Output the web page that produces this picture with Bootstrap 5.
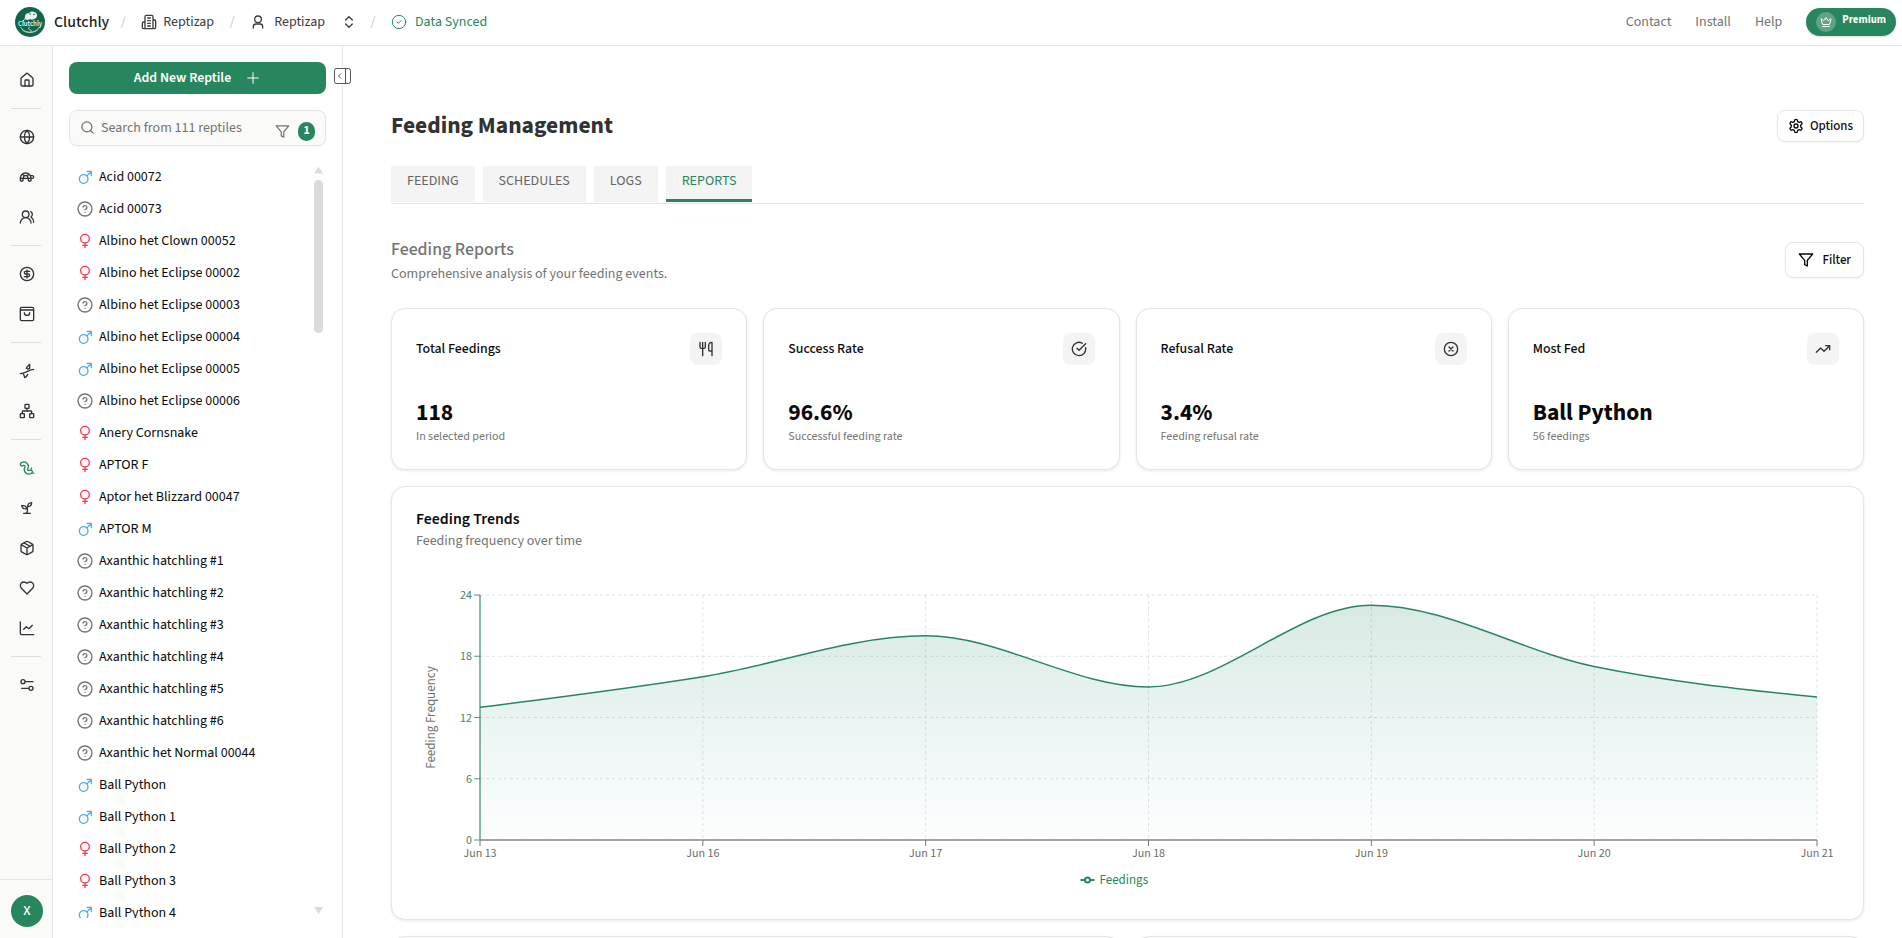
<!DOCTYPE html>
<html lang="en">
<head>
<meta charset="utf-8">
<meta name="viewport" content="width=device-width, initial-scale=1">
<title>Clutchly – Feeding Management</title>
<link href="https://cdn.jsdelivr.net/npm/bootstrap@5.3.0/dist/css/bootstrap.min.css" rel="stylesheet">
<style>
:root{--green:#28865e;--line:#e4e5e4;--muted:#737373;--soft:#f4f4f4;--ink:#303233}
body{font-family:"Source Sans 3","Noto Sans CJK SC",sans-serif;font-size-adjust:.486;font-size:14px;line-height:20px;color:#0a0a0a;background:#fff}
a{text-decoration:none;color:inherit}
button,input{font-size-adjust:inherit}
svg{display:block;flex:none}
.ico{width:16px;height:16px;fill:none;stroke:currentColor;stroke-width:2;stroke-linecap:round;stroke-linejoin:round}
.thin{stroke-width:1.5}
.app-top{height:46px;border-bottom:1px solid var(--line);color:#3a3c3d;padding-bottom:1px}
.brand-link{padding-left:15px;gap:9px}
.brand-name{font-size:16px;font-weight:500;color:#202223}
.slash{color:#c5cac8;width:20px;text-align:center}
.near{gap:6px}
.profile{font-size:14px;line-height:20px;color:inherit;margin-right:6px}
.text-green{color:var(--green)}
.top-links{gap:24px;color:var(--muted);padding-right:6px}
.premium{height:28px;background:var(--green);color:#fff;border:0;border-radius:14px;font-size:11px;line-height:16px;font-weight:700;gap:6px;padding:0 10px;box-shadow:0 1px 2px rgba(0,0,0,.15)}
.crown{width:20px;height:20px;border-radius:50%;background:rgba(255,255,255,.25)}
.crown svg{width:12px;height:12px}
.app-body{height:calc(100vh - 46px)}
.rail{width:53px;background:#fafaf9;border-right:1px solid var(--line);color:var(--ink);flex:none}
.rail-items{padding-top:14px}
.rail a{display:flex;align-items:center;justify-content:center;height:40px;width:53px}
.rail hr{width:30px;margin:8px auto;border-top:1px solid #dcdddd;opacity:1}
.rail-foot{border-top:1px solid var(--line);height:59px;padding:15px 0 0 11px}
.avatar{width:32px;height:32px;border-radius:50%;background:var(--green);color:#fff;font-size:14px;font-weight:500}
.side{width:290px;border-right:1px solid var(--line);padding:16px 16px 20px;flex:none;position:relative}
.fold{position:absolute;right:-9px;top:21px;width:17px;height:18px;background:#fff;border:0;padding:0;color:#555}
.add{height:32px;background:var(--green);color:#fff;border:0;border-radius:8px;font-weight:600;gap:14px}
.search{height:36px;border:1px solid var(--line);border-radius:8px;background:#fafaf9;padding:0 10px;gap:6px;margin:16px 0 15px;box-shadow:0 1px 2px rgba(0,0,0,.04);color:var(--muted)}
.search input{border:0;background:none;outline:0;padding:0;min-width:0;color:var(--muted)}
.search input::placeholder{color:var(--muted);opacity:1}
.search .ico{width:15px;height:15px}
.filters{padding-top:7px;gap:8px}
.count{width:17px;height:19px;border-radius:9px;background:var(--green);color:#fff;font-size:12px;line-height:17px;font-weight:700}
.reptiles{overflow:hidden;gap:2px}
.reptiles li{height:32px;display:flex;align-items:center;gap:6px;padding-left:8px}
.male{color:#4fa9f5}.female{color:#f63c47}.unknown{color:var(--muted)}
.bar{width:9px;padding:6px 0 4px;margin-right:3px;flex:none}
.bar i{display:block;background:#d9dcdb}
.bar .up{height:7px;clip-path:polygon(50% 0,100% 100%,0 100%)}
.bar .down{height:7px;clip-path:polygon(0 0,100% 0,50% 100%)}
.bar .thumb{height:153px;border-radius:5px;margin-top:6px}
.main-pane{padding:64px 38px 0 48px;overflow:hidden;min-width:0}
h1{font-size:24px;line-height:32px;font-weight:700;color:var(--ink);margin:0}
.outline{height:36px;padding:0 12px;border:1px solid var(--line);border-radius:8px;background:#fff;color:#0a0a0a;font-weight:500;gap:8px;box-shadow:0 1px 2px rgba(0,0,0,.05);font-size:13px}
.outline.compact{height:32px;padding:0 10px;gap:6px}
.tabs{border-bottom:1px solid var(--line);gap:8px;margin-top:24px;padding-bottom:1px}
.tabs a{height:36px;padding:5px 16px 0;background:var(--soft);color:#666;border-bottom:3px solid var(--soft);line-height:21px}
.tabs a.on{color:var(--green);border-color:var(--green)}
.report-head{margin:32px 0 24px}
h2{font-size:18px;line-height:28px;font-weight:500;color:var(--muted);margin:0}
.sub{color:var(--muted);margin:0}
.grid{display:grid;gap:16px;grid-template-columns:repeat(4,minmax(0,1fr))}
.grid.halves{grid-template-columns:repeat(2,minmax(0,1fr))}
.panel{border:1px solid var(--line);border-radius:14px;background:#fff;box-shadow:0 1px 3px rgba(0,0,0,.09);padding:24px}
.tile{width:32px;height:32px;border-radius:8px;background:var(--soft);color:var(--ink)}
.figure-big{font-size:24px;line-height:32px;font-weight:700;margin-top:32px}
.note{font-size:12px;line-height:16px;color:var(--muted)}
h3{font-size:16px;line-height:16px;font-weight:600;margin:0 0 4px}
#chart{height:327px;margin-top:17px}
#chart text{font-size:12px}
#chart .label{font-size:13px}
</style>
</head>
<body>
<svg width="0" height="0" class="position-absolute" aria-hidden="true">
  <defs>
    <symbol id="i-male" viewBox="0 0 24 24"><circle cx="10" cy="15" r="6.500"/><path d="m15 10 6.500-6.500M15 3.500h6.500V10M18 3.500l3.500 3.500"/></symbol>
    <symbol id="i-female" viewBox="0 0 24 24"><circle cx="12" cy="8.500" r="6.500"/><path d="M12 15v7M8.500 18.500h7"/></symbol>
    <symbol id="i-unknown" viewBox="0 0 24 24"><circle cx="12" cy="12" r="10.500"/><path d="M9.090 9a3 3 0 0 1 5.830 1c0 2-3 3-3 3M12 17h.01"/></symbol>
    <symbol id="i-filter" viewBox="0 0 24 24"><path d="M22 3H2l8 9.460V19l4 2v-8.540z"/></symbol>
  </defs>
</svg>

<header class="app-top d-flex align-items-center">
  <a href="#" class="brand-link d-flex align-items-center">
    <svg width="30" height="30" viewBox="0 0 30 30"><circle cx="15" cy="15" r="15" fill="#11664a"/><path d="M7.500 16a5 5 0 0 1 3-4.500M10 9.500a4 3.200 0 0 1 4-3.500 4.500 3.500 0 0 1 8 2.500c0 2-1.500 3.500-3.500 3.500l-1.500 1-1.500-1-3 1-3-1z" fill="#e9f2ee"/><circle cx="15" cy="7" r=".8" fill="#11664a"/><circle cx="19" cy="7.500" r=".8" fill="#11664a"/><path d="M5.500 20c4 7 15 7 19 0M7 22.500c4 4 12 4 16 0M15 20c-2 0-2 3 0 2.800s1.500 3-.500 3" fill="none" stroke="#b8d5c9" stroke-width=".9"/><text x="15" y="18.500" text-anchor="middle" font-size="7" font-weight="500" fill="#fff">Clutchly</text></svg>
    <span class="brand-name">Clutchly</span>
  </a>
  <span class="slash ms-1">/</span>
  <a href="#" class="near d-flex align-items-center ms-2"><svg class="ico" viewBox="0 0 24 24"><path d="M6 22V4a2 2 0 0 1 2-2h8a2 2 0 0 1 2 2v18ZM6 12H4a2 2 0 0 0-2 2v6a2 2 0 0 0 2 2h2M18 9h2a2 2 0 0 1 2 2v9a2 2 0 0 1-2 2h-2M10 6h4M10 10h4M10 14h4M10 18h4"/></svg>Reptizap</a>
  <span class="slash ms-2">/</span>
  <button class="profile btn p-0 border-0 d-flex align-items-center ms-2"><svg class="ico me-2" viewBox="0 0 24 24"><circle cx="12" cy="8" r="5"/><path d="M19 21v-2a4 4 0 0 0-4-4H9a4 4 0 0 0-4 4v2"/></svg>Reptizap<svg class="ico ms-3" viewBox="0 0 24 24"><path d="m7 15 5 5 5-5M7 9l5-5 5 5"/></svg></button>
  <span class="slash">/</span>
  <span class="d-flex align-items-center gap-2 ms-2 text-green"><svg class="ico thin" viewBox="0 0 24 24"><circle cx="12" cy="12" r="10"/><path d="m9 12 2 2 4-4"/></svg>Data Synced</span>
  <nav class="d-flex align-items-center ms-auto top-links">
    <a href="#">Contact</a><a href="#">Install</a><a href="#">Help</a>
    <button class="premium d-flex align-items-center"><span class="crown d-flex align-items-center justify-content-center"><svg class="ico" viewBox="0 0 24 24"><path d="M11.560 3.270a.5.5 0 0 1 .880 0L15.400 8.870a1 1 0 0 0 1.510.3L21.200 5.500a.5.5 0 0 1 .8.520l-2.840 10.240a1 1 0 0 1-.950.740H5.800a1 1 0 0 1-.960-.740L2 6.020a.5.5 0 0 1 .8-.520l4.280 3.670a1 1 0 0 0 1.520-.3zM5 21h14"/></svg></span><span class="pb-1">Premium</span></button>
  </nav>
</header>

<div class="app-body d-flex">
  <nav class="rail d-flex flex-column" aria-label="Sections">
    <div class="rail-items flex-grow-1">
      <a href="#" aria-label="Home"><svg class="ico" viewBox="0 0 24 24"><path d="M15 21v-8a1 1 0 0 0-1-1h-4a1 1 0 0 0-1 1v8"/><path d="M3 10a2 2 0 0 1 .709-1.528l7-6a2 2 0 0 1 2.582 0l7 6A2 2 0 0 1 21 10v9a2 2 0 0 1-2 2H5a2 2 0 0 1-2-2z"/></svg></a>
      <hr>
      <a href="#" aria-label="Explore"><svg class="ico" viewBox="0 0 24 24"><circle cx="12" cy="12" r="10"/><path d="M12 2a14.500 14.500 0 0 0 0 20 14.500 14.500 0 0 0 0-20M2 12h20"/></svg></a>
      <a href="#" aria-label="Reptiles"><svg class="ico" viewBox="0 0 24 24"><path d="m12 10 2 4v3a1 1 0 0 0 1 1h2a1 1 0 0 0 1-1v-3a8 8 0 1 0-16 0v3a1 1 0 0 0 1 1h2a1 1 0 0 0 1-1v-3l2-4h4ZM4.820 7.900 8 10M15.180 7.900 12 10M16.930 10H20a2 2 0 0 1 0 4H2"/></svg></a>
      <a href="#" aria-label="Users"><svg class="ico" viewBox="0 0 24 24"><path d="M18 21a8 8 0 0 0-16 0"/><circle cx="10" cy="8" r="5"/><path d="M22 20c0-3.370-2-6.500-4-8a5 5 0 0 0-.450-8.300"/></svg></a>
      <hr>
      <a href="#" aria-label="Sales"><svg class="ico" viewBox="0 0 24 24"><circle cx="12" cy="12" r="10"/><path d="M16 8h-6a2 2 0 1 0 0 4h4a2 2 0 1 1 0 4H8M12 18V6"/></svg></a>
      <a href="#" aria-label="Shop"><svg class="ico" viewBox="0 0 24 24"><rect x="2" y="2" width="20" height="20" rx="2"/><path d="M3 6h18M16 10a4 4 0 0 1-8 0"/></svg></a>
      <hr>
      <a href="#" aria-label="Breeding"><svg class="ico" viewBox="0 0 24 24"><path d="M2 16c3 0 6-1 10-3s7-3.500 10-3.500M11 8l1.500-2.500L16 2v6l-3 1M7 17l1.500 5 2.500-1.500L13 17"/></svg></a>
      <a href="#" aria-label="Lineage"><svg class="ico" viewBox="0 0 24 24"><rect x="16" y="16" width="6" height="6" rx="1"/><rect x="2" y="16" width="6" height="6" rx="1"/><rect x="9" y="2" width="6" height="6" rx="1"/><path d="M5 16v-3a1 1 0 0 1 1-1h12a1 1 0 0 1 1 1v3M12 12V8"/></svg></a>
      <hr>
      <a href="#" aria-label="Feeding" class="text-green"><svg class="ico" viewBox="0 0 24 24"><path d="m19 12-1.500 3M19.630 18.810 22 20M6.470 8.230a1.680 1.680 0 0 1 2.440 1.930l-.640 2.080a6.760 6.760 0 0 0 10.160 7.670l.420-.270a1 1 0 1 0-2.730-4.210l-.420.270a1.760 1.760 0 0 1-2.630-1.990l.640-2.080A6.660 6.660 0 0 0 3.940 3.900l-.700.400a1 1 0 1 0 2.550 4.340z"/></svg></a>
      <a href="#" aria-label="Growth"><svg class="ico" viewBox="0 0 24 24"><path d="M7 20h10M10 20c5.500-2.500.800-6.400 3-10M9.500 9.400c1.100.8 1.800 2.200 2.300 3.700-2 .4-3.500.4-4.800-.3-1.200-.6-2.300-1.900-3-4.200 2.800-.5 4.400 0 5.500.8zM14.100 6a7 7 0 0 0-1.100 4c1.900-.1 3.300-.6 4.300-1.400 1-1 1.600-2.300 1.700-4.600-2.700.1-4 1-4.900 2z"/></svg></a>
      <a href="#" aria-label="Inventory"><svg class="ico" viewBox="0 0 24 24"><path d="M11 21.730a2 2 0 0 0 2 0l7-4A2 2 0 0 0 21 16V8a2 2 0 0 0-1-1.730l-7-4a2 2 0 0 0-2 0l-7 4A2 2 0 0 0 3 8v8a2 2 0 0 0 1 1.730zM12 22V12M3.300 7 12 12l8.700-5M7.500 4.270l9 5.150"/></svg></a>
      <a href="#" aria-label="Health"><svg class="ico" viewBox="0 0 24 24"><path d="M19 14c1.490-1.460 3-3.210 3-5.500A5.500 5.500 0 0 0 16.500 3c-1.760 0-3 .5-4.500 2-1.500-1.500-2.740-2-4.500-2A5.500 5.500 0 0 0 2 8.500c0 2.300 1.500 4.050 3 5.500l7 7Z"/></svg></a>
      <a href="#" aria-label="Statistics"><svg class="ico" viewBox="0 0 24 24"><path d="M2 3v17a2 2 0 0 0 2 2h18M7 14l4-4 4 3 5-5"/></svg></a>
      <hr>
      <a href="#" aria-label="Settings"><svg class="ico" viewBox="0 0 24 24"><path d="M21 7H10M14 17H4"/><circle cx="18" cy="17" r="3"/><circle cx="6" cy="7" r="3"/></svg></a>
    </div>
    <div class="rail-foot"><button class="avatar d-flex align-items-center justify-content-center border-0 p-0">X</button></div>
  </nav>

  <aside class="side d-flex flex-column">
    <button class="fold" aria-label="Collapse list"><svg width="17" height="18" viewBox="0 0 17 18" fill="none" stroke="currentColor"><rect x=".5" y="1.500" width="16" height="15" rx="2"/><path d="M11.500 1.500v15M7 6.500 4.500 9 7 11.500"/></svg></button>
    <button class="add d-flex align-items-center justify-content-center w-100">Add New Reptile<svg class="ico thin" viewBox="0 0 24 24"><path d="M4 12h16M12 4v16"/></svg></button>
    <div class="search d-flex align-items-center flex-shrink-0">
      <svg class="ico" viewBox="0 0 24 24"><circle cx="11" cy="11" r="8"/><path d="m21 21-4.300-4.300"/></svg>
      <input type="search" class="flex-grow-1" placeholder="Search from 111 reptiles" aria-label="Search reptiles">
      <span class="d-flex align-items-center filters"><svg class="ico"><use href="#i-filter"/></svg><span class="count text-center">1</span></span>
    </div>
    <div class="d-flex flex-grow-1" style="min-height:0">
      <ul class="reptiles list-unstyled m-0 flex-grow-1" id="reptiles"></ul>
      <div class="bar d-flex flex-column"><i class="up"></i><i class="thumb"></i><i class="down mt-auto"></i></div>
    </div>
  </aside>

  <main class="main-pane flex-grow-1">
    <div class="d-flex justify-content-between align-items-center">
      <h1>Feeding Management</h1>
      <button class="outline compact d-flex align-items-center"><svg class="ico" viewBox="0 0 24 24"><path d="M12.220 2h-.440a2 2 0 0 0-2 2v.180a2 2 0 0 1-1 1.730l-.430.250a2 2 0 0 1-2 0l-.150-.080a2 2 0 0 0-2.730.730l-.220.380a2 2 0 0 0 .730 2.730l.150.100a2 2 0 0 1 1 1.720v.510a2 2 0 0 1-1 1.740l-.150.090a2 2 0 0 0-.730 2.730l.220.380a2 2 0 0 0 2.730.730l.150-.080a2 2 0 0 1 2 0l.430.250a2 2 0 0 1 1 1.730V20a2 2 0 0 0 2 2h.440a2 2 0 0 0 2-2v-.180a2 2 0 0 1 1-1.730l.430-.250a2 2 0 0 1 2 0l.150.080a2 2 0 0 0 2.730-.730l.220-.390a2 2 0 0 0-.730-2.730l-.150-.080a2 2 0 0 1-1-1.740v-.500a2 2 0 0 1 1-1.740l.150-.090a2 2 0 0 0 .730-2.730l-.220-.380a2 2 0 0 0-2.730-.730l-.150.080a2 2 0 0 1-2 0l-.430-.250a2 2 0 0 1-1-1.730V4a2 2 0 0 0-2-2z"/><circle cx="12" cy="12" r="3"/></svg>Options</button>
    </div>
    <nav class="tabs d-flex"><a href="#">FEEDING</a><a href="#">SCHEDULES</a><a href="#">LOGS</a><a href="#" class="on" aria-current="page">REPORTS</a></nav>
    <div class="report-head d-flex justify-content-between align-items-center">
      <div><h2>Feeding Reports</h2><p class="sub">Comprehensive analysis of your feeding events.</p></div>
      <button class="outline d-flex align-items-center"><svg class="ico"><use href="#i-filter"/></svg>Filter</button>
    </div>
    <div class="grid mb-3">
      <section class="panel"><div class="d-flex justify-content-between align-items-center"><span class="fw-medium">Total Feedings</span><span class="tile d-flex align-items-center justify-content-center"><svg class="ico" viewBox="0 0 24 24"><path d="M3 2v7c0 1.100.900 2 2 2h4a2 2 0 0 0 2-2V2M7 2v20M21 15V2a5 5 0 0 0-5 5v6c0 1.100.900 2 2 2h3Zm0 0v7"/></svg></span></div><div class="figure-big">118</div><div class="note">In selected period</div></section>
      <section class="panel"><div class="d-flex justify-content-between align-items-center"><span class="fw-medium">Success Rate</span><span class="tile d-flex align-items-center justify-content-center"><svg class="ico" viewBox="0 0 24 24"><path d="M21.801 10A10 10 0 1 1 17 3.335M9 11l3 3L22 4"/></svg></span></div><div class="figure-big">96.6%</div><div class="note">Successful feeding rate</div></section>
      <section class="panel"><div class="d-flex justify-content-between align-items-center"><span class="fw-medium">Refusal Rate</span><span class="tile d-flex align-items-center justify-content-center"><svg class="ico" viewBox="0 0 24 24"><circle cx="12" cy="12" r="10"/><path d="m15 9-6 6M9 9l6 6"/></svg></span></div><div class="figure-big">3.4%</div><div class="note">Feeding refusal rate</div></section>
      <section class="panel"><div class="d-flex justify-content-between align-items-center"><span class="fw-medium">Most Fed</span><span class="tile d-flex align-items-center justify-content-center"><svg class="ico" viewBox="0 0 24 24"><path d="m22 7-8.500 8.500-5-5L2 17M16 7h6v6"/></svg></span></div><div class="figure-big">Ball Python</div><div class="note">56 feedings</div></section>
    </div>
    <section class="panel mb-3">
      <h3>Feeding Trends</h3>
      <p class="sub">Feeding frequency over time</p>
      <div id="chart"></div>
    </section>
    <div class="grid halves"><section class="panel"></section><section class="panel"></section></div>
  </main>
</div>

<script src="https://cdn.jsdelivr.net/npm/bootstrap@5.3.0/dist/js/bootstrap.bundle.min.js"></script>
<script>
const reptiles = [
  ['male','Acid 00072'],['unknown','Acid 00073'],['female','Albino het Clown 00052'],['female','Albino het Eclipse 00002'],
  ['unknown','Albino het Eclipse 00003'],['male','Albino het Eclipse 00004'],['male','Albino het Eclipse 00005'],
  ['unknown','Albino het Eclipse 00006'],['female','Anery Cornsnake'],['female','APTOR F'],['female','Aptor het Blizzard 00047'],
  ['male','APTOR M'],['unknown','Axanthic hatchling #1'],['unknown','Axanthic hatchling #2'],['unknown','Axanthic hatchling #3'],
  ['unknown','Axanthic hatchling #4'],['unknown','Axanthic hatchling #5'],['unknown','Axanthic hatchling #6'],
  ['unknown','Axanthic het Normal 00044'],['male','Ball Python'],['male','Ball Python 1'],['female','Ball Python 2'],
  ['female','Ball Python 3'],['male','Ball Python 4']];
document.getElementById('reptiles').innerHTML = reptiles.map(([sex, name]) =>
  `<li><svg class="ico ${sex}"><use href="#i-${sex}"/></svg><a href="#">${name}</a></li>`).join('');

// Area chart with monotone cubic interpolation, redrawn to the panel's width
const days = ['Jun 13','Jun 16','Jun 17','Jun 18','Jun 19','Jun 20','Jun 21'];
const values = [13,16,20,15,23,17,14];
function drawChart() {
  const box = document.getElementById('chart'), W = box.clientWidth, L = 64, R = W - 22, T = 27, H = 245, B = T + H;
  const step = (R - L) / (days.length - 1), X = i => L + i * step, Y = v => B - v / 24 * H;
  const p = values.map((v, i) => [X(i), Y(v)]), n = p.length, s = [], m = [];
  for (let i = 0; i < n - 1; i++) s.push((p[i + 1][1] - p[i][1]) / step);
  for (let i = 1; i < n - 1; i++) m[i] = s[i - 1] * s[i] <= 0 ? 0 : Math.sign(s[i]) * 2 * Math.min(Math.abs(s[i - 1]), Math.abs(s[i]), Math.abs(s[i - 1] + s[i]) / 4);
  m[0] = (3 * s[0] - m[1]) / 2; m[n - 1] = (3 * s[n - 2] - m[n - 2]) / 2;
  let d = `M${p[0]}`;
  for (let i = 1; i < n; i++) d += `C${p[i - 1][0] + step / 3},${p[i - 1][1] + m[i - 1] * step / 3} ${p[i][0] - step / 3},${p[i][1] - m[i] * step / 3} ${p[i]}`;
  let grid = '', ticks = '';
  for (const v of [0, 6, 12, 18, 24]) {
    grid += `<path d="M${L} ${Y(v)}H${R}"/>`;
    ticks += `<path d="M${L - 6} ${Y(v)}H${L}" stroke="#28865e" opacity=".8"/><text x="${L - 8}" y="${Y(v) + 4}" text-anchor="end" fill="#4b7f6d">${v}</text>`;
  }
  days.forEach((t, i) => {
    grid += `<path d="M${X(i)} ${T}V${B}"/>`;
    ticks += `<path d="M${X(i)} ${B}v6" stroke="#777"/><text x="${X(i)}" y="${B + 17}" text-anchor="middle" fill="#6b6b66">${t}</text>`;
  });
  const c = W / 2 - 11;
  box.innerHTML = `<svg width="${W}" height="327" role="img" aria-label="Feeding frequency by day">
    <defs><linearGradient id="fade" gradientUnits="userSpaceOnUse" x1="0" y1="${Y(23)}" x2="0" y2="${B}"><stop offset="0" stop-color="#28865e" stop-opacity=".18"/><stop offset="1" stop-color="#28a0a0" stop-opacity=".01"/></linearGradient></defs>
    <g stroke="#c9cecc" stroke-opacity=".6" stroke-dasharray="3 3" fill="none">${grid}</g>
    <path d="${d}V${B}H${L}Z" fill="url(#fade)"/><path d="${d}" fill="none" stroke="#28865e" stroke-width="1.5"/>
    <path d="M${L} ${T}V${B}" stroke="#28865e" stroke-opacity=".55" stroke-width="2"/><path d="M${L} ${B}H${R}" stroke="#777" stroke-opacity=".65" stroke-width="2"/>
    ${ticks}
    <text class="label" transform="translate(19 ${T + H / 2}) rotate(-90)" text-anchor="middle" fill="#737373">Feeding Frequency</text>
    <g fill="none" stroke="#28865e" stroke-width="2"><path d="M${c - 36} 312h4M${c - 26} 312h4"/><circle cx="${c - 29}" cy="312" r="2.500"/></g>
    <text class="label" x="${c - 17}" y="316" fill="#28865e">Feedings</text></svg>`;
}
drawChart();
addEventListener('resize', drawChart);
</script>
</body>
</html>
